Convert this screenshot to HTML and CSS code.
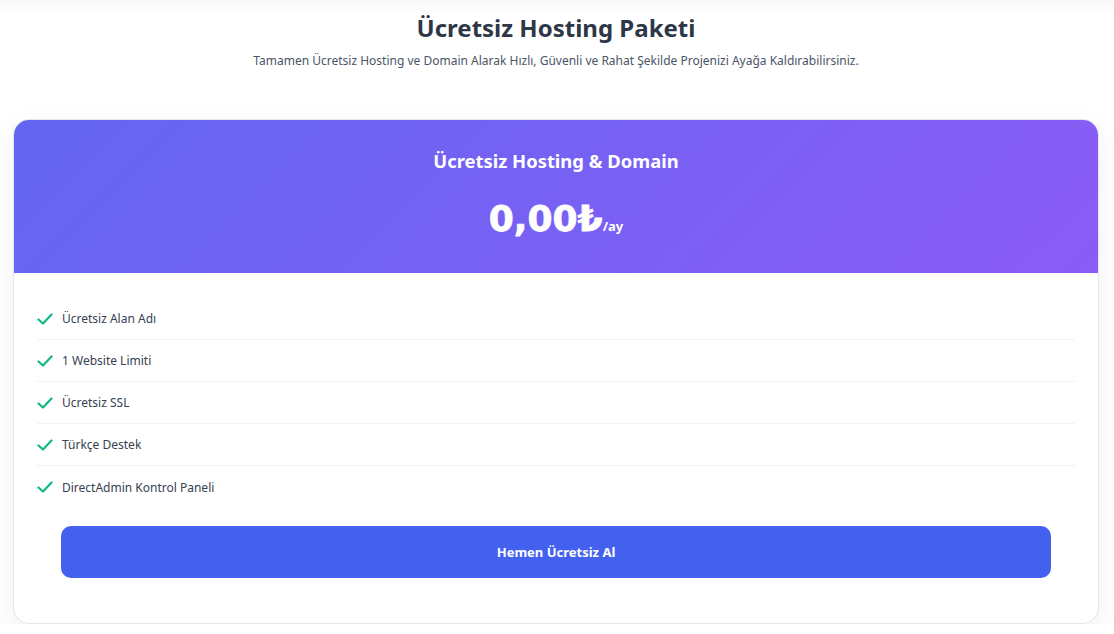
FILE: index.html
```html
<!DOCTYPE html>
<html lang="tr">
<head>
<meta charset="utf-8">
<title>Ücretsiz Hosting Paketi</title>
<link rel="stylesheet" href="styles.css">
</head>
<body>
<main class="page">
  <header class="intro">
    <h1 class="intro-title">Ücretsiz Hosting Paketi</h1>
    <p class="intro-sub">Tamamen Ücretsiz Hosting ve Domain Alarak Hızlı, Güvenli ve Rahat Şekilde Projenizi Ayağa Kaldırabilirsiniz.</p>
  </header>
  <section class="card">
    <div class="card-head">
      <h2 class="plan-name">Ücretsiz Hosting &amp; Domain</h2>
      <div class="price"><span class="amount">0,00₺</span><span class="period">/ay</span></div>
    </div>
    <div class="card-body">
      <ul class="features">
        <li class="feature"><svg class="check" viewBox="0 0 16 16"><path d="M1.5 8.5 L6 12.5 L14.5 3.5" fill="none" stroke="#10b981" stroke-width="2.2" stroke-linecap="round" stroke-linejoin="round"/></svg><span>Ücretsiz Alan Adı</span></li>
        <li class="feature"><svg class="check" viewBox="0 0 16 16"><path d="M1.5 8.5 L6 12.5 L14.5 3.5" fill="none" stroke="#10b981" stroke-width="2.2" stroke-linecap="round" stroke-linejoin="round"/></svg><span>1 Website Limiti</span></li>
        <li class="feature"><svg class="check" viewBox="0 0 16 16"><path d="M1.5 8.5 L6 12.5 L14.5 3.5" fill="none" stroke="#10b981" stroke-width="2.2" stroke-linecap="round" stroke-linejoin="round"/></svg><span>Ücretsiz SSL</span></li>
        <li class="feature"><svg class="check" viewBox="0 0 16 16"><path d="M1.5 8.5 L6 12.5 L14.5 3.5" fill="none" stroke="#10b981" stroke-width="2.2" stroke-linecap="round" stroke-linejoin="round"/></svg><span>Türkçe Destek</span></li>
        <li class="feature"><svg class="check" viewBox="0 0 16 16"><path d="M1.5 8.5 L6 12.5 L14.5 3.5" fill="none" stroke="#10b981" stroke-width="2.2" stroke-linecap="round" stroke-linejoin="round"/></svg><span>DirectAdmin Kontrol Paneli</span></li>
      </ul>
      <div class="cta-wrap"><a class="cta" href="#">Hemen Ücretsiz Al</a></div>
    </div>
  </section>
</main>
</body>
</html>
```
FILE: styles.css
```css
* { box-sizing: border-box; }
html, body { margin: 0; padding: 0; }
body {
  font-family: "Noto Sans", "Open Sans", sans-serif;
  background: linear-gradient(#f6f6f6 0, #ffffff 12px) no-repeat, #ffffff;
  color: #374151;
}
.page {
  padding: 10px 15px 0 13px;
}
.intro { text-align: center; }
.intro-title {
  margin: 0;
  font-size: 24px;
  line-height: 36px;
  font-weight: 700;
  color: #2d3748;
}
.intro-sub {
  margin: 6px 0 0;
  font-size: 12px;
  line-height: 18px;
  color: #4a5568;
}
.card {
  margin-top: 49px;
  background: #fff;
  border: 1px solid #e2e6ef;
  border-radius: 16px;
  overflow: hidden;
  box-shadow: 0 8px 30px rgba(0,0,0,0.06);
}
.card-head {
  height: 153px;
  background: linear-gradient(135deg, #6366f1 0%, #8b5cf6 100%);
  color: #fff;
  text-align: center;
  padding-top: 28px;
}
.plan-name {
  margin: 0;
  font-size: 18.4px;
  line-height: 26px;
  font-weight: 700;
}
.price {
  margin-top: 22px;
  line-height: 46px;
}
.amount {
  font-family: "DejaVu Sans", sans-serif;
  font-size: 36px;
  font-weight: 900;
  -webkit-text-stroke: 0.8px #fff;
}
.period {
  font-size: 13px;
  font-weight: 700;
}
.card-body {
  padding: 25px 23px 45px;
}
.features {
  list-style: none;
  margin: 0;
  padding: 0;
}
.feature {
  display: flex;
  align-items: center;
  gap: 9px;
  height: 42px;
  font-size: 12px;
  color: #374151;
  border-bottom: 1px solid #f0f2f5;
}
.feature:last-child { border-bottom: none; }
.check { width: 16px; height: 16px; flex: none; }
.cta-wrap { padding: 18px 24px 0 24px; }
.cta {
  display: flex;
  align-items: center;
  justify-content: center;
  height: 52px;
  border-radius: 10px;
  background: #4361ee;
  color: #fff;
  font-size: 13px;
  font-weight: 700;
  text-decoration: none;
}
```
